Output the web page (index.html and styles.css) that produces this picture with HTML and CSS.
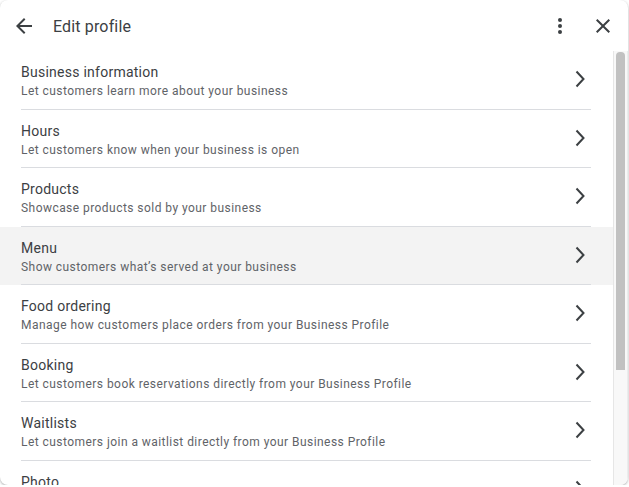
FILE: index.html
```html
<!DOCTYPE html>
<html>
<head>
  <meta charset="UTF-8">
  <title>Edit profile</title>
  <link rel="stylesheet" href="styles.css">
</head>
<body>
  <div class="dialog">
    <div class="header">
      <svg class="back" width="24" height="24" viewBox="0 0 24 24"><path d="M20 11H7.83l5.59-5.59L12 4l-8 8 8 8 1.41-1.41L7.83 13H20v-2z" fill="#3c4043"/></svg>
      <div class="title">Edit profile</div>
      <svg class="more" width="24" height="24" viewBox="0 0 24 24"><circle cx="12" cy="6" r="2" fill="#3c4043"/><circle cx="12" cy="12" r="2" fill="#3c4043"/><circle cx="12" cy="18" r="2" fill="#3c4043"/></svg>
      <svg class="close" width="24" height="24" viewBox="0 0 24 24"><path d="M19 6.41 17.59 5 12 10.59 6.41 5 5 6.41 10.59 12 5 17.59 6.41 19 12 13.41 17.59 19 19 17.59 13.41 12z" fill="#3c4043"/></svg>
    </div>
    <div class="body">
      <div class="list" id="list"></div>
      <div class="scrollbar"><div class="thumb"></div></div>
    </div>
  </div>
  <script>
    // profile sections
    const sections = [
      ["Business information", "Let customers learn more about your business"],
      ["Hours", "Let customers know when your business is open"],
      ["Products", "Showcase products sold by your business"],
      ["Menu", "Show customers what’s served at your business", true],
      ["Food ordering", "Manage how customers place orders from your Business Profile"],
      ["Booking", "Let customers book reservations directly from your Business Profile"],
      ["Waitlists", "Let customers join a waitlist directly from your Business Profile"],
      ["Photo", ""]
    ];

    const list = document.getElementById("list");
    sections.forEach(([name, desc, active]) => {
      const row = document.createElement("div");
      row.className = active ? "row active" : "row";
      row.innerHTML = `
        <div class="inner">
          <div class="text">
            <div class="name">${name}</div>
            ${desc ? `<div class="desc">${desc}</div>` : ""}
          </div>
          <svg class="chev" width="20" height="18" viewBox="0 0 20 18"><polyline points="5.5,1.5 12.5,9 5.5,16.5" fill="none" stroke="#3c4043" stroke-width="2"/></svg>
        </div>
      `;
      list.appendChild(row);
    });
  </script>
</body>
</html>
```

FILE: styles.css
```css
body {
  margin: 0;
  background: #fff;
  font-family: Roboto, "Liberation Sans", Arial, sans-serif;
}
.dialog {
  width: 628px;
  height: 485px;
  border-radius: 8px;
  background: #fff;
  box-shadow: 0 1px 3px rgba(60, 64, 67, 0.3), 0 1px 2px rgba(60, 64, 67, 0.15);
  overflow: hidden;
  display: flex;
  flex-direction: column;
}
.header {
  height: 51px;
  display: flex;
  align-items: center;
  padding: 0 13px 0 12px;
  flex-shrink: 0;
}
.back {
  margin-right: 17px;
}
.title {
  flex: 1;
  font-size: 16px;
  color: #3c4043;
  letter-spacing: 0.15px;
  padding-top: 1px;
}
.more {
  margin-right: 19px;
}
.body {
  flex: 1;
  display: flex;
  min-height: 0;
}
.list {
  flex: 1;
  overflow: hidden;
}
.row {
  height: 58.5px;
  padding: 0 22px 0 21px;
}
.row.active {
  background: #f3f3f3;
}
.inner {
  height: 100%;
  box-sizing: border-box;
  border-bottom: 1px solid #dadce0;
  display: flex;
  align-items: center;
}
.text {
  flex: 1;
  align-self: flex-start;
  padding-top: 13px;
}
.name {
  font-size: 14px;
  color: #3c4043;
  line-height: 16px;
  letter-spacing: 0.25px;
}
.desc {
  font-size: 12px;
  color: #5f6368;
  line-height: 16px;
  margin-top: 3px;
  letter-spacing: 0.45px;
}
.chev {
  flex-shrink: 0;
  margin-top: -1px;
}
.scrollbar {
  width: 9px;
  background: #f8f8f8;
  border-left: 1px solid #e6e6e6;
  border-right: 1px solid #ececec;
  padding: 1px 2px;
  flex-shrink: 0;
}
.thumb {
  height: 318px;
  background: #c1c1c1;
  border-radius: 4px 4px 0 0;
}
```
